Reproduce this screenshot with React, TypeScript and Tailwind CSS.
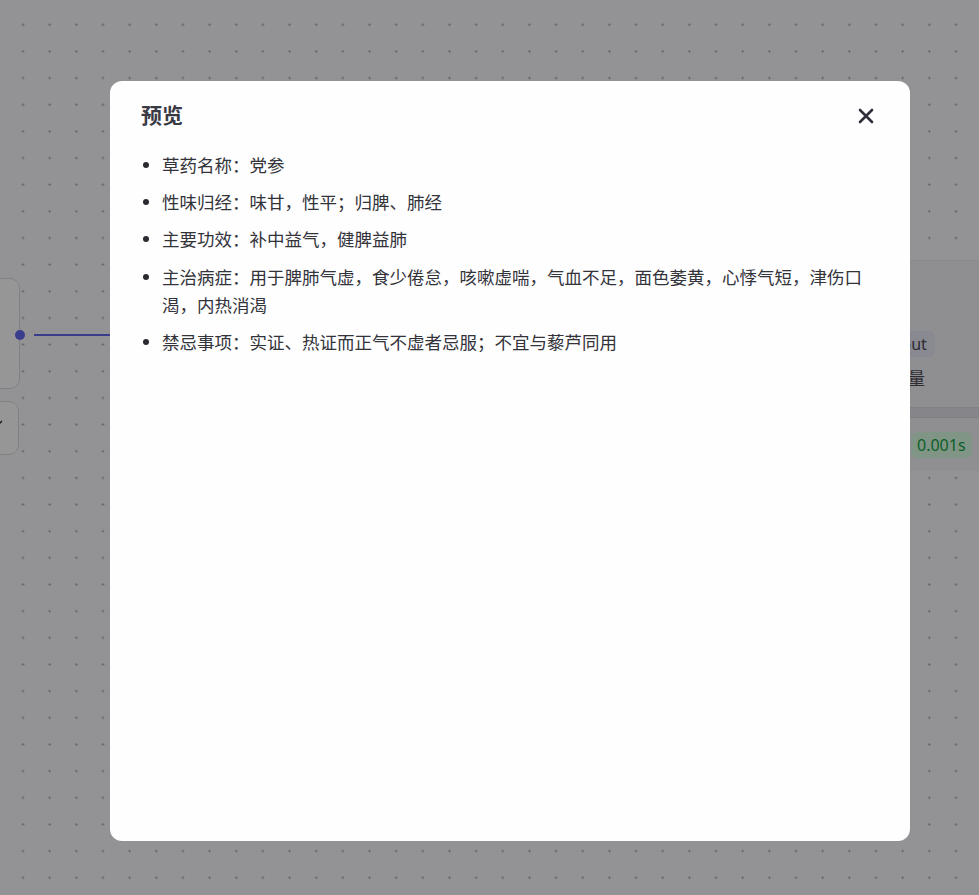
const items = [
  "草药名称：党参",
  "性味归经：味甘，性平；归脾、肺经",
  "主要功效：补中益气，健脾益肺",
  "主治病症：用于脾肺气虚，食少倦怠，咳嗽虚喘，气血不足，面色萎黄，心悸气短，津伤口渴，内热消渴",
  "禁忌事项：实证、热证而正气不虚者忌服；不宜与藜芦同用",
];

function CloseIcon() {
  return (
    <svg width="16" height="16" viewBox="0 0 16 16" fill="none">
      <path
        d="M2 2L14 14M14 2L2 14"
        stroke="currentColor"
        strokeWidth="2.6"
        strokeLinecap="round"
      />
    </svg>
  );
}

function Canvas() {
  return (
    <div className="absolute inset-0 overflow-hidden bg-[#f6f6f9] bg-[radial-gradient(circle,#b4b4ba_1.1px,transparent_1.3px)] bg-size-[26.67px_26.67px] bg-position-[9.7px_11.4px]">
      {/* left node */}
      <div className="absolute left-[-140px] top-[278px] h-[111px] w-[160px] rounded-[10px] border border-[#d6d6dc] bg-[#fafafc]" />
      <div className="absolute left-[15px] top-[330px] h-[10px] w-[10px] rounded-full bg-[#6266e8]" />
      <div className="absolute left-[34px] top-[334px] h-[2px] w-[240px] bg-[#6266e8]" />
      <div className="absolute left-[-140px] top-[401px] h-[54px] w-[159px] rounded-[10px] border border-[#d6d6dc] bg-[#fafafc]" />
      <svg width="12" height="12" viewBox="0 0 24 24" fill="none" className="absolute left-[-8px] top-[418px]">
        <path d="M4 12l5 5L20 6" stroke="#222" strokeWidth="2.5" />
      </svg>

      {/* right node */}
      <div className="absolute left-[860px] top-[260px] flex w-[200px] flex-col border-t border-[#e4e4ea] bg-[#eeeef3]">
        <div className="h-[70px]" />
        <div className="flex items-center">
          <span className="ml-[8px] rounded-[6px] bg-[#e4e6f2] px-[8px] py-[1px] text-[16px] leading-[24px] text-[#4a4a52]">
            output
          </span>
        </div>
        <div className="ml-[31px] mt-[10px] text-[17px] leading-[24px] text-[#4a4a52]">变量</div>
        <div className="mt-[16px] h-[11px] border-y border-[#d8d8de] bg-[#e0e0e6]" />
        <div className="flex h-[53px] items-center">
          <span className="ml-[51px] rounded-[6px] bg-[#d6f9e0] px-[6px] text-[16px] leading-[26px] text-[#14a043]">
            0.001s
          </span>
        </div>
      </div>
    </div>
  );
}

export default function App() {
  return (
    <div className="relative h-[895px] w-[979px] overflow-hidden font-['Noto_Sans','Noto_Sans_CJK_SC',sans-serif]">
      <Canvas />
      <div className="absolute inset-0 flex items-start bg-black/40 pl-[110px] pt-[81px]">
        <div className="flex h-[760px] w-[800px] flex-col rounded-[12px] bg-[#fefeff] pl-[31px] pr-[37px] pt-[20px]">
          <div className="flex h-[28px] items-center justify-between">
            <h2 className="text-[21px] font-bold leading-[28px] text-[#3a3a44]">预览</h2>
            <button type="button" className="-mr-[1px] mt-[1px] text-[#2f2f3a]">
              <CloseIcon />
            </button>
          </div>
          <ul className="mt-[22px] flex flex-col gap-[9.2px] text-[17.5px] leading-[28px] text-[#33333a]">
            {items.map((t) => (
              <li key={t} className="flex">
                <span className="mt-[11px] ml-[2px] mr-[13px] h-[6px] w-[6px] shrink-0 rounded-full bg-[#2a2a30]" />
                <span>{t}</span>
              </li>
            ))}
          </ul>
        </div>
      </div>
    </div>
  );
}
